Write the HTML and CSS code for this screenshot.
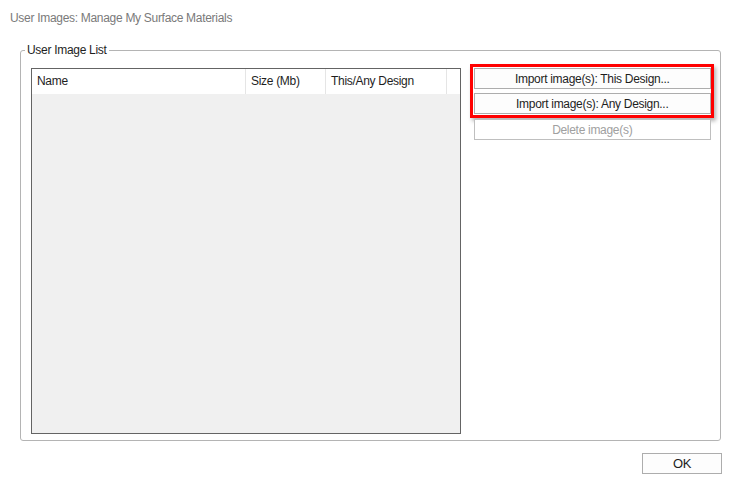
FILE: index.html
```html
<!DOCTYPE html>
<html>
  <head>
    <title>User Images: Manage My Surface Materials</title>
    <link rel="stylesheet" href="styles.css">
  </head>
  <body>
    <div class="title">User Images: Manage My Surface Materials</div>

    <fieldset class="group">
      <legend>User Image List</legend>
      <div class="group-body">
        <div class="list">
          <div class="list-head">
            <div class="col col-name">Name</div>
            <div class="col col-size">Size (Mb)</div>
            <div class="col col-kind">This/Any Design</div>
            <div class="col col-fill"></div>
          </div>
          <div class="list-rows"></div>
        </div>

        <div class="actions">
          <div class="highlight">
            <button class="btn">Import image(s): This Design...</button>
            <button class="btn">Import image(s): Any Design...</button>
          </div>
          <button class="btn btn-delete" disabled>Delete image(s)</button>
        </div>
      </div>
    </fieldset>

    <div class="footer">
      <button class="btn btn-ok">OK</button>
    </div>
  </body>
</html>
```

FILE: styles.css
```css
body {
  margin: 0;
  background: #ffffff;
  font-family: "Liberation Sans", Arial, sans-serif;
  font-size: 12px;
  letter-spacing: -0.3px;
  color: #1e1e1e;
}

.title {
  padding: 10px 0 0 10px;
  line-height: 16px;
  color: #7a7a7a;
}

.group {
  box-sizing: border-box;
  width: 701px;
  margin: 17px 0 0 20px;
  padding: 11px 6px 6px 10px;
  border: 1px solid #b4b4b4;
  border-radius: 3px;
  min-width: 0;
}
.group legend {
  margin-left: -6px;
  padding: 0 2px;
  line-height: 14px;
  color: #1e1e1e;
}

.group-body {
  display: flex;
  align-items: flex-start;
  gap: 9px;
}

.list {
  box-sizing: border-box;
  width: 431px;
  height: 366px;
  border: 1px solid #646464;
  display: flex;
  flex-direction: column;
  background: #f0f0f0;
}
.list-head {
  display: flex;
  height: 25px;
  background: #ffffff;
  flex-shrink: 0;
}
.col {
  box-sizing: border-box;
  line-height: 25px;
  padding-left: 5px;
  border-right: 1px solid #e5e5e5;
}
.col-name {
  width: 214px;
}
.col-size {
  width: 80px;
}
.col-kind {
  width: 121px;
}
.col-fill {
  flex: 1;
  border-right: none;
}

.actions {
  width: 245px;
  display: flex;
  flex-direction: column;
  margin-top: -4px;
}
.highlight {
  display: flex;
  flex-direction: column;
  gap: 4px;
  border: 3px solid #ff0000;
  padding: 1px 0 1px 1px;
  box-shadow: 2px 3px 4px rgba(0, 0, 0, 0.3);
}

.btn {
  box-sizing: border-box;
  width: 237px;
  height: 21px;
  padding: 0;
  border: 1px solid #adadad;
  background: #fdfdfd;
  font-family: "Liberation Sans", Arial, sans-serif;
  font-size: 12px;
  letter-spacing: -0.3px;
  color: #1e1e1e;
}
.btn-delete {
  margin: 1px 0 0 4px;
  color: #a0a0a0;
  border-color: #bfbfbf;
  background: #ffffff;
}

.footer {
  width: 722px;
  display: flex;
  justify-content: flex-end;
  margin-top: 12px;
}
.btn-ok {
  width: 80px;
  font-size: 13px;
}
```
